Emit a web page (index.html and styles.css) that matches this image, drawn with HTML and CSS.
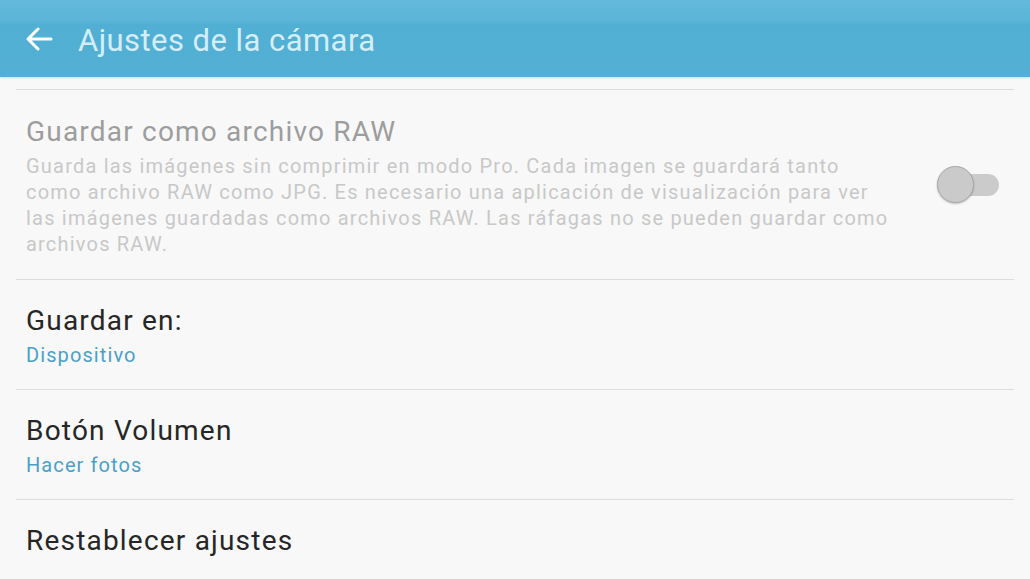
FILE: index.html
```html
<!DOCTYPE html>
<html lang="es">
<head>
    <meta charset="UTF-8">
    <meta name="viewport" content="width=device-width, initial-scale=1.0">
    <title>Ajustes de la cámara</title>
    <link rel="stylesheet" href="styles.css">
</head>
<body>
    <div id="header">
        <div class="back">
            <svg width="28" height="24" viewBox="0 0 28 24">
                <path d="M3 12 H26 M13 2 L3 12 L13 22" fill="none" stroke="#ffffff" stroke-width="3" stroke-linecap="round" stroke-linejoin="round"/>
            </svg>
        </div>
        <h1>Ajustes de la cámara</h1>
    </div>
    <div id="list">
        <div class="item top-spacer"></div>
        <div class="item disabled">
            <div class="text">
                <div class="title">Guardar como archivo RAW</div>
                <div class="desc">Guarda las imágenes sin comprimir en modo Pro. Cada imagen se guardará tanto como archivo RAW como JPG. Es necesario una aplicación de visualización para ver las imágenes guardadas como archivos RAW. Las ráfagas no se pueden guardar como archivos RAW.</div>
            </div>
            <div class="switch">
                <div class="track"></div>
                <div class="thumb"></div>
            </div>
        </div>
        <div class="item">
            <div class="text">
                <div class="title">Guardar en:</div>
                <div class="sub">Dispositivo</div>
            </div>
        </div>
        <div class="item">
            <div class="text">
                <div class="title">Botón Volumen</div>
                <div class="sub">Hacer fotos</div>
            </div>
        </div>
        <div class="item last">
            <div class="text">
                <div class="title">Restablecer ajustes</div>
            </div>
        </div>
    </div>
</body>
</html>
```

FILE: styles.css
```css
* {
    box-sizing: border-box;
}
body {
    margin: 0;
    padding: 0;
    background-color: #f8f8f8;
    font-family: Roboto, "Liberation Sans", sans-serif;
    overflow: hidden;
}
#header {
    height: 77px;
    background: linear-gradient(to bottom, #62b9db 0px, #5ab5d8 20px, #52afd4 24px, #53afd4 100%);
    display: flex;
    align-items: center;
    padding-left: 25px;
    box-shadow: 0 1px 2px rgba(0, 0, 0, 0.12);
}
#header .back {
    display: flex;
    align-items: center;
    margin-top: 1px;
}
#header h1 {
    margin: 3px 0 0 25px;
    font-size: 31px;
    font-weight: 400;
    letter-spacing: 0.45px;
    color: #d4eef8;
}
#list {
    margin: 0 16px;
}
#list .item {
    display: flex;
    align-items: center;
    padding: 24px 10px 21px;
    border-bottom: 1px solid #dddddd;
}
#list .item.top-spacer {
    padding: 0;
    height: 13px;
}
#list .item.disabled {
    padding-top: 25px;
    padding-bottom: 22px;
}
#list .item.last {
    border-bottom: none;
}
#list .text {
    flex: 1;
}
#list .title {
    font-size: 28px;
    line-height: 34px;
    letter-spacing: 1.2px;
    color: #262626;
    margin-bottom: 4px;
}
#list .sub {
    font-size: 20px;
    line-height: 26px;
    letter-spacing: 1.1px;
    color: #4ba0c6;
}
#list .disabled .title {
    color: #9d9d9d;
}
#list .desc {
    font-size: 20px;
    line-height: 26px;
    letter-spacing: 1.2px;
    color: #c8c8c8;
    max-width: 868px;
}
.switch {
    position: relative;
    width: 62px;
    height: 38px;
    margin-left: 30px;
    margin-right: 5px;
    margin-top: -2px;
}
.switch .track {
    position: absolute;
    right: 0;
    top: 8px;
    width: 56px;
    height: 22px;
    border-radius: 11px;
    background-color: #cbcbcb;
}
.switch .thumb {
    position: absolute;
    left: 0;
    top: 0;
    width: 37px;
    height: 37px;
    border-radius: 50%;
    background-color: #cacaca;
    border: 1px solid #a8a8a8;
    box-shadow: 0 1px 2px rgba(0, 0, 0, 0.25);
}
```
